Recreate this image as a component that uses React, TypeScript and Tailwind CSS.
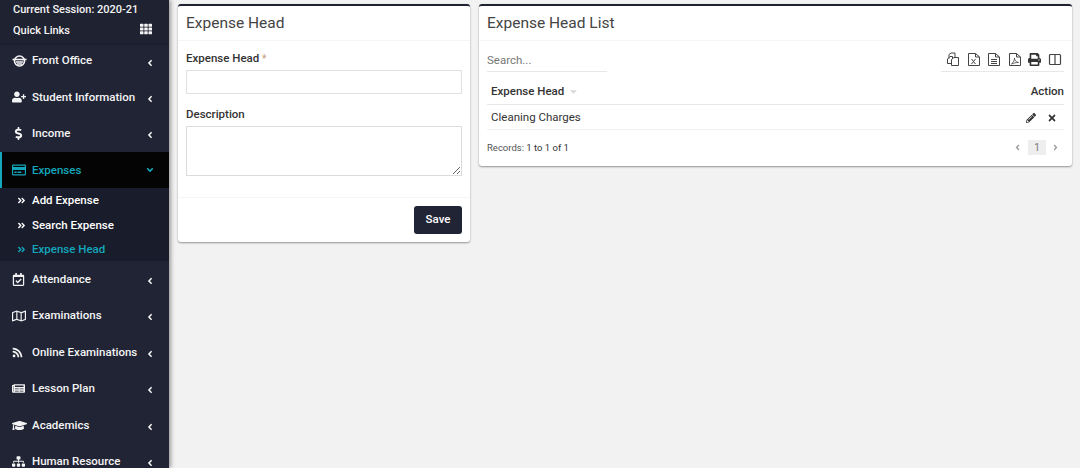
import React from "react";
import {
  FaUserPlus, FaDollarSign, FaRegCreditCard, FaRegCalendarCheck, FaRegMap, FaRss, FaNewspaper,
  FaGraduationCap, FaSitemap, FaTh, FaAngleLeft, FaAngleDown, FaAngleDoubleRight,
  FaPrint, FaPencilAlt, FaTimes, FaCaretDown, FaAngleRight,
} from "react-icons/fa";

const FrontIcon = () => (
  <svg width="15" height="14" viewBox="0 0 15 14" fill="none" stroke="currentColor">
    <circle cx="7.5" cy="7" r="5" strokeWidth="1.6" />
    <path d="M0.5 5.5H14.5" strokeWidth="1.6" />
    <path d="M4 8H11M5 10H10" strokeWidth="1.3" />
  </svg>
);

const Tool = ({ children, w = 14 }: { children: React.ReactNode; w?: number }) => (
  <svg width={w} height="15" viewBox={`0 0 ${w} 15`} fill="none" stroke="#444" strokeWidth="1">
    {children}
  </svg>
);
const Sheet = () => <path d="M1.5 1.5H8.5L12.5 5V13.5H1.5ZM8.5 1.5V5H12.5" />;

function Item({ icon, label, h = "h-[36.4px]" }: { icon: React.ReactNode; label: string; h?: string }) {
  return (
    <div className={`flex items-center ${h} pl-[12px] pr-[14px] text-[#f4f4f4]`}>
      <span className="w-[20px] flex items-center shrink-0">{icon}</span>
      <span className="text-[11.5px] font-medium flex-1 whitespace-nowrap">{label}</span>
      <FaAngleLeft className="text-[10px] shrink-0 mt-[3px]" />
    </div>
  );
}

function Sub({ label, active }: { label: string; active?: boolean }) {
  return (
    <div className={`flex items-center h-[24.5px] pl-[16px] ${active ? "text-[#14a6bb]" : "text-white"}`}>
      <FaAngleDoubleRight className="text-[9px] w-[15px] pr-[6px] shrink-0" />
      <span className="text-[11.5px] font-medium">{label}</span>
    </div>
  );
}

export default function App() {
  return (
    <div className="flex h-[468px] w-[1080px] overflow-hidden bg-[#f2f2f2] font-['Roboto',sans-serif]">
      <aside className="w-[169px] h-[468px] shrink-0 overflow-hidden bg-[#212435] shadow-[2px_0_4px_rgba(0,0,0,0.35)] z-10">
        <div className="h-[43px] pl-[13px] pr-[16px] pt-[2px] bg-[#1f2231] shadow-[0_1px_3px_rgba(0,0,0,0.25)] text-[#f4f4f4] text-[11px] font-medium">
          <div className="h-[16px] leading-[16px] whitespace-nowrap">Current Session: 2020-21</div>
          <div className="flex items-center justify-between h-[20px] mt-[3px] pr-[1px]">
            <span>Quick Links</span>
            <FaTh className="text-[12px] -mt-[5px]" />
          </div>
        </div>
        <Item h="h-[36px]" icon={<FrontIcon />} label="Front Office" />
        <Item icon={<FaUserPlus className="text-[14px]" />} label="Student Information" />
        <Item h="h-[37px]" icon={<FaDollarSign className="text-[13px]" />} label="Income" />
        <div className="flex items-center h-[36px] pl-[10px] pr-[14px] bg-[#040404] border-l-2 border-[#14a6bb] text-[#14a6bb]">
          <span className="w-[20px] flex items-center shrink-0"><FaRegCreditCard className="text-[14px]" /></span>
          <span className="text-[11.5px] font-medium flex-1">Expenses</span>
          <FaAngleDown className="text-[10px] shrink-0" />
        </div>
        <div className="bg-[#191c2b] h-[73px] pl-px">
          <Sub label="Add Expense" />
          <Sub label="Search Expense" />
          <Sub label="Expense Head" active />
        </div>
        <Item icon={<FaRegCalendarCheck className="text-[13px]" />} label="Attendance" />
        <Item icon={<FaRegMap className="text-[14px]" />} label="Examinations" />
        <Item icon={<FaRss className="text-[11px]" />} label="Online Examinations" />
        <Item icon={<FaNewspaper className="text-[13px]" />} label="Lesson Plan" />
        <Item icon={<FaGraduationCap className="text-[15px]" />} label="Academics" />
        <Item icon={<FaSitemap className="text-[13px]" />} label="Human Resource" />
      </aside>

      <main className="flex-1 min-w-0 flex items-start pl-[9px] pr-[8px] pt-[4px] gap-[9px] text-[#333]">
        <section className="w-[292px] shrink-0 h-[238px] bg-white rounded-[3px] border-t-[2px] border-[#1f2231] shadow-[0_1px_2px_rgba(0,0,0,0.4)]">
          <div className="h-[35px] px-[8px] flex items-center border-b border-[#f5f5f5]">
            <h3 className="text-[15.5px] leading-[20px] text-[#444]">Expense Head</h3>
          </div>
          <div className="px-[8px] pt-[9px] h-[157px] border-b border-[#f5f5f5]">
            <label className="block h-[16px] text-[11.5px] leading-[16px] font-medium text-[#333]">
              Expense Head <span className="text-[#c9a38a] text-[10px] leading-none">*</span>
            </label>
            <input className="block w-[276px] h-[24px] mt-[4px] border border-[#e0e0e0] bg-white" />
            <label className="block mt-[12px] text-[11.5px] leading-[16px] font-medium text-[#333]">Description</label>
            <textarea className="block w-[276px] h-[50px] mt-[4px] border border-[#dcdcdc] bg-white resize-y" />
          </div>
          <div className="flex justify-end px-[8px] pt-[8px]">
            <button className="w-[48px] h-[28px] rounded-[3px] bg-[#212435] text-white text-[11.5px] font-medium">Save</button>
          </div>
        </section>

        <section className="flex-1 min-w-0 h-[162px] bg-white rounded-[3px] border-t-[2px] border-[#1f2231] shadow-[0_1px_2px_rgba(0,0,0,0.4)]">
          <div className="h-[35px] px-[8px] flex items-center border-b border-[#f5f5f5]">
            <h3 className="text-[15.5px] leading-[20px] text-[#444]">Expense Head List</h3>
          </div>
          <div className="flex items-start justify-between px-[8px] h-[26px] mt-[4px]">
            <div className="w-[120px] h-[27px] pt-[6px] flex items-center border-b border-[#e8e8e8] text-[11.5px] text-[#777]">Search...</div>
            <div className="w-[123px] h-[27px] pt-[2px] flex items-center justify-between pl-[5px] pr-[2px] border-b border-[#e8e8e8] text-[#333] text-[13px]">
              <Tool>
                <path d="M3 6.5V2.5L5 1H9V5" />
                <path d="M1.5 7L4 4.5H6.5V11.5H1.5Z" />
                <path d="M5.5 7.5L8 5.5H12.5V13.5H5.5Z" fill="white" />
              </Tool>
              <Tool><Sheet /><path d="M4.5 7L8.5 12M8.5 7L4.5 12" /></Tool>
              <Tool><Sheet /><path d="M4 7.5H10M4 9.5H10M4 11.5H10" /></Tool>
              <Tool><Sheet /><path d="M3.5 12C5.5 10.5 6.5 8 6.5 6C6.5 8.5 8 10 10.5 10.5C8 10.5 5.5 11 3.5 12Z" strokeWidth="0.8" /></Tool>
              <FaPrint className="text-[13px] text-[#333]" />
              <Tool><rect x="1.5" y="2.5" width="11" height="10" rx="1" strokeWidth="1.2" /><path d="M7 2.5V12.5" strokeWidth="1.2" /></Tool>
            </div>
          </div>
          <div className="px-[8px]">
            <div className="flex items-center justify-between h-[34px] pt-[8px] pl-[4px] border-b border-[#e8e8e8] text-[11.5px] font-medium text-[#333]">
              <span className="flex items-center gap-[3px]">Expense Head <FaCaretDown className="text-[#d8d8d8] text-[11px] ml-[1px]" /></span>
              <span>Action</span>
            </div>
            <div className="flex items-center justify-between h-[25px] pt-[1px] px-[4px] border-b border-[#f2f2f2] text-[11.5px] text-[#333]">
              <span>Cleaning Charges</span>
              <span className="flex items-center gap-[11px] text-[#333] text-[10px] pr-[3px]">
                <FaPencilAlt />
                <FaTimes />
              </span>
            </div>
            <div className="flex items-center justify-between h-[35px]">
              <span className="text-[9.5px] text-[#555] pt-[2px]">Records: <span className="text-[#333]">1 to 1 of 1</span></span>
              <span className="flex items-center text-[#999] text-[9px] pr-[4px]">
                <FaAngleLeft className="mr-[6px]" />
                <span className="w-[18px] h-[15px] bg-[#eeeeee] flex items-center justify-center text-[#777] text-[10px]">1</span>
                <FaAngleRight className="ml-[5px]" />
              </span>
            </div>
          </div>
        </section>
      </main>
    </div>
  );
}
